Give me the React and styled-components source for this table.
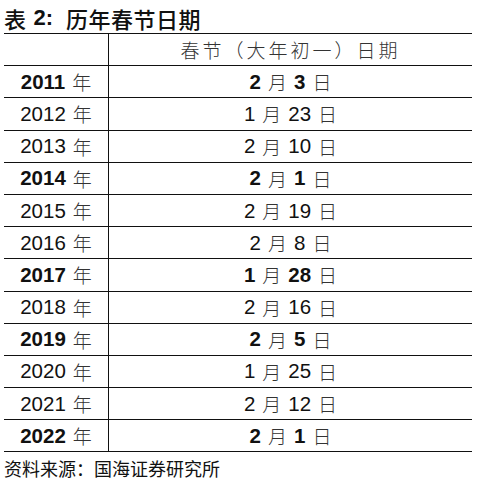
import React from "react";
import styled, { createGlobalStyle } from "styled-components";

const GlobalStyle = createGlobalStyle`
  body {
    margin: 0;
    background: #fff;
    font-family: "Liberation Sans", "Noto Sans CJK SC", sans-serif;
    color: #111;
  }
`;

const Page = styled.div`
  width: 481px;
  height: 481px;
  overflow: hidden;
  display: flex;
  flex-direction: column;
`;

const Title = styled.div`
  height: 33px;
  box-sizing: border-box;
  padding: 2px 0 0 4px;
  display: flex;
  align-items: center;
  font-size: 22px;
  font-family: "Noto Sans CJK SC", sans-serif;
  font-weight: 500;
  letter-spacing: 0.5px;
  .num {
    font-family: "Liberation Sans", sans-serif;
    font-weight: 700;
    margin: 0 13px 0 7px;
    letter-spacing: 0;
  }
`;

const Table = styled.div`
  margin: 0 9px 0 4px;
  border-top: 1.5px solid #111;
`;

const Row = styled.div`
  display: grid;
  grid-template-columns: 104px 1fr;
  height: 32.2px;
  box-sizing: border-box;
  border-bottom: 1.5px solid #111;
`;

const Cell = styled.div`
  display: flex;
  align-items: center;
  justify-content: center;
  font-size: 20.5px;
  white-space: pre;
  & + & {
    border-left: 1.5px solid #111;
  }
`;

const Num = styled.span`
  font-weight: ${(p) => (p.$bold ? 700 : 400)};
  color: #111;
`;

const Cjk = styled.span`
  font-family: "Noto Sans CJK SC", sans-serif;
  font-weight: 300;
  font-size: 19px;
  color: #333;
  margin: 0 7px;
  &:last-child {
    margin-right: 0;
  }
`;

const Header = styled.span`
  font-family: "Noto Sans CJK SC", sans-serif;
  font-weight: 300;
  font-size: 19px;
  letter-spacing: 3px;
  color: #333;
`;

const Source = styled.div`
  padding: 3px 0 0 4px;
  font-size: 18px;
  font-family: "Noto Sans CJK SC", sans-serif;
  font-weight: 400;
  color: #111;
`;

const rows = [
  { year: 2011, m: 2, d: 3, bold: true },
  { year: 2012, m: 1, d: 23 },
  { year: 2013, m: 2, d: 10 },
  { year: 2014, m: 2, d: 1, bold: true },
  { year: 2015, m: 2, d: 19 },
  { year: 2016, m: 2, d: 8 },
  { year: 2017, m: 1, d: 28, bold: true },
  { year: 2018, m: 2, d: 16 },
  { year: 2019, m: 2, d: 5, bold: true },
  { year: 2020, m: 1, d: 25 },
  { year: 2021, m: 2, d: 12 },
  { year: 2022, m: 2, d: 1, bold: true },
];

const App = () => {
  return (
    <Page>
      <GlobalStyle />
      <Title>
        表<span className="num">2:</span>历年春节日期
      </Title>
      <Table>
        <Row>
          <Cell />
          <Cell>
            <Header>春节（大年初一）日期</Header>
          </Cell>
        </Row>
        {rows.map((r) => (
          <Row key={r.year}>
            <Cell>
              <Num $bold={r.bold}>{r.year}</Num>
              <Cjk>年</Cjk>
            </Cell>
            <Cell>
              <Num $bold={r.bold}>{r.m}</Num>
              <Cjk>月</Cjk>
              <Num $bold={r.bold}>{r.d}</Num>
              <Cjk>日</Cjk>
            </Cell>
          </Row>
        ))}
      </Table>
      <Source>资料来源：国海证券研究所</Source>
    </Page>
  );
};

export default App;
